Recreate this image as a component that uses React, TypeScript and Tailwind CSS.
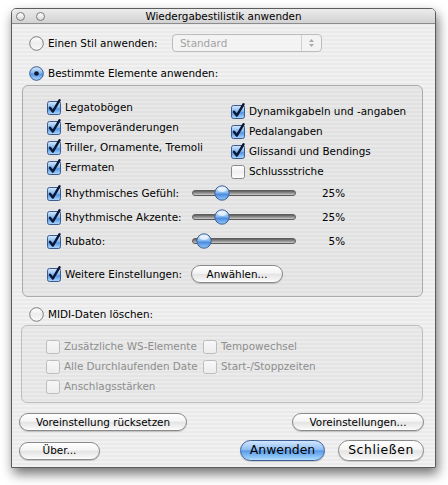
import React from 'react';

// Aqua controls, drawn small
const CheckBox: React.FC<{ checked?: boolean; disabled?: boolean }> = ({ checked = false, disabled = false }) => {
  const stroke = checked ? '#3b5b90' : disabled ? '#bcbcbc' : '#8a8a8a';
  const fill = checked ? 'url(#cbBlue)' : disabled ? 'url(#cbDisabled)' : 'url(#cbWhite)';
  return (
    <svg width="14" height="15" viewBox="0 0 14 15" className="shrink-0 overflow-visible">
      <defs>
        <linearGradient id="cbBlue" x1="0" y1="0" x2="0" y2="1">
          <stop offset="0" stopColor="#d9eafd" />
          <stop offset="0.45" stopColor="#86b9f1" />
          <stop offset="0.55" stopColor="#5596e6" />
          <stop offset="1" stopColor="#b0d8fb" />
        </linearGradient>
        <linearGradient id="cbWhite" x1="0" y1="0" x2="0" y2="1">
          <stop offset="0" stopColor="#ffffff" />
          <stop offset="0.5" stopColor="#f0f0f0" />
          <stop offset="1" stopColor="#fdfdfd" />
        </linearGradient>
        <linearGradient id="cbDisabled" x1="0" y1="0" x2="0" y2="1">
          <stop offset="0" stopColor="#f8f8f8" />
          <stop offset="1" stopColor="#ececec" />
        </linearGradient>
      </defs>
      <rect x="0.5" y="1.5" width="13" height="13" rx="2" fill={fill} stroke={stroke} />
      {checked && (
        <path
          d="M3 7.8 L5.8 11.6 L12.6 0.2"
          fill="none"
          stroke="#0c1733"
          strokeWidth="2.4"
          strokeLinecap="round"
          strokeLinejoin="round"
        />
      )}
    </svg>
  );
};

const Radio: React.FC<{ selected?: boolean }> = ({ selected = false }) => (
  <svg width="15" height="15" viewBox="0 0 15 15" className="shrink-0">
    <defs>
      <linearGradient id="rdBlue" x1="0" y1="0" x2="0" y2="1">
        <stop offset="0" stopColor="#d9eafd" />
        <stop offset="0.45" stopColor="#86b9f1" />
        <stop offset="0.55" stopColor="#5596e6" />
        <stop offset="1" stopColor="#b0d8fb" />
      </linearGradient>
      <linearGradient id="rdWhite" x1="0" y1="0" x2="0" y2="1">
        <stop offset="0" stopColor="#ffffff" />
        <stop offset="0.5" stopColor="#ededed" />
        <stop offset="1" stopColor="#fbfbfb" />
      </linearGradient>
    </defs>
    <circle
      cx="7.5"
      cy="7.5"
      r="6.8"
      fill={selected ? 'url(#rdBlue)' : 'url(#rdWhite)'}
      stroke={selected ? '#3b5b90' : '#7c7c7c'}
    />
    {selected && <circle cx="7.5" cy="7.5" r="2.3" fill="#101830" />}
  </svg>
);

const Slider: React.FC<{ value: number }> = ({ value }) => (
  <div className="relative w-[104px] h-[16px] flex items-center shrink-0">
    <div className="w-full h-[6px] rounded-full border border-[#5c5c5c] bg-[linear-gradient(to_bottom,#5e5e5e,#9c9c9c_60%,#cdcdcd)]" />
    <svg
      width="16"
      height="16"
      viewBox="0 0 16 16"
      className="absolute top-0"
      style={{ left: (value / 100) * 88 }}
    >
      <defs>
        <linearGradient id="knob" x1="0" y1="0" x2="0" y2="1">
          <stop offset="0" stopColor="#e2effd" />
          <stop offset="0.45" stopColor="#8bbcf2" />
          <stop offset="0.6" stopColor="#4d8de0" />
          <stop offset="1" stopColor="#93c9f8" />
        </linearGradient>
      </defs>
      <circle cx="8" cy="8" r="7.2" fill="url(#knob)" stroke="#3f5f92" />
      <ellipse cx="8" cy="4.6" rx="4.4" ry="2.4" fill="#ffffff" opacity="0.65" />
    </svg>
  </div>
);

const AquaButton: React.FC<{
  children: React.ReactNode;
  className?: string;
  primary?: boolean;
}> = ({ children, className = '', primary = false }) => (
  <div
    className={`flex items-center justify-center rounded-full border shadow-[0_1px_1px_rgba(0,0,0,0.18)] ${
      primary
        ? 'border-[#3d5f98] bg-[linear-gradient(to_bottom,#d3e6fc_0%,#8fbef3_45%,#5a9be8_52%,#8ec6f8_85%,#b8ddfc_100%)]'
        : 'border-[#8a8a8a] bg-[linear-gradient(to_bottom,#ffffff_0%,#f4f4f4_45%,#e4e4e4_52%,#f3f3f3_85%,#ffffff_100%)]'
    } ${className}`}
  >
    {children}
  </div>
);

const CheckRow: React.FC<{ label: string; checked?: boolean; disabled?: boolean; className?: string }> = ({
  label,
  checked,
  disabled,
  className = '',
}) => (
  <div className={`flex items-center gap-[4px] h-[20px] whitespace-nowrap ${className}`}>
    <CheckBox checked={checked} disabled={disabled} />
    <span className={disabled ? 'text-[#8e8e8e]' : ''}>{label}</span>
  </div>
);

const sliders = [
  { label: 'Rhythmisches Gefühl:', value: 25 },
  { label: 'Rhythmische Akzente:', value: 25 },
  { label: 'Rubato:', value: 5 },
];

const App: React.FC = () => {
  return (
    <div className="w-[448px] h-[485px] bg-white pt-[8px] pl-[11px] font-['DejaVu_Sans','Liberation_Sans',sans-serif] text-[10.4px] text-black leading-none">
      <div className="w-[425px] h-[460px] border border-[#5c5c5c] rounded-t-[5px] overflow-hidden flex flex-col shadow-[2px_6px_12px_rgba(0,0,0,0.55)] bg-[repeating-linear-gradient(to_bottom,#f1f1f1_0px,#f1f1f1_2px,#eaeaea_2px,#eaeaea_4px)]">
        {/* Title bar */}
        <div className="h-[15px] shrink-0 grid grid-cols-[1fr_auto_1fr] items-center border-b border-[#8c8c8c] bg-[linear-gradient(to_bottom,#ececec,#d2d2d2)]">
          <div className="flex items-center gap-[11px] pl-[4px]">
            <div className="w-[9px] h-[9px] rounded-full border border-[#7a7a7a] bg-[linear-gradient(to_bottom,#ffffff,#d8d8d8)]" />
            <div className="w-[9px] h-[9px] rounded-full border border-[#7a7a7a] bg-[linear-gradient(to_bottom,#ffffff,#d8d8d8)]" />
          </div>
          <span className="pt-[1px]">Wiedergabestilistik anwenden</span>
          <div />
        </div>

        {/* Style choice */}
        <div className="mt-[10px] h-[18px] ml-[17px] flex items-center">
          <Radio />
          <span className="ml-[4px] w-[124px]">Einen Stil anwenden:</span>
          <div className="w-[150px] h-[18px] flex border border-[#bcbcbc] rounded-[4px] bg-[#f6f6f6]/60 text-[#a3a3a3]">
            <span className="flex-1 flex items-center pl-[7px]">Standard</span>
            <div className="w-[20px] border-l border-[#d0d0d0] flex flex-col items-center justify-center gap-[2px]">
              <svg width="5" height="3" viewBox="0 0 5 3">
                <path d="M0 3 L2.5 0 L5 3 Z" fill="#a8a8a8" />
              </svg>
              <svg width="5" height="3" viewBox="0 0 5 3">
                <path d="M0 0 L2.5 3 L5 0 Z" fill="#a8a8a8" />
              </svg>
            </div>
          </div>
        </div>

        <div className="mt-[14px] h-[14px] ml-[17px] flex items-center">
          <Radio selected />
          <span className="ml-[4px]">Bestimmte Elemente anwenden:</span>
        </div>

        {/* Elements group */}
        <div className="mt-[5px] ml-[10px] w-[401px] h-[212px] shrink-0 border border-[#ababab] rounded-[6px] bg-black/[0.035] pl-[24px] pt-[11px]">
          <div className="h-[84px] flex">
            <div className="w-[184px]">
              <CheckRow label="Legatobögen" checked />
              <CheckRow label="Tempoveränderungen" checked />
              <CheckRow label="Triller, Ornamente, Tremoli" checked />
              <CheckRow label="Fermaten" checked />
            </div>
            <div className="pt-[4px]">
              <CheckRow label="Dynamikgabeln und -angaben" checked />
              <CheckRow label="Pedalangaben" checked />
              <CheckRow label="Glissandi und Bendings" checked />
              <CheckRow label="Schlussstriche" />
            </div>
          </div>

          {sliders.map((s) => (
            <div key={s.label} className="h-[24px] flex items-center">
              <CheckRow label={s.label} checked className="w-[145px]" />
              <Slider value={s.value} />
              <span className="w-[49px] text-right">{s.value}%</span>
            </div>
          ))}

          <div className="mt-[11px] h-[20px] flex items-center">
            <CheckRow label="Weitere Einstellungen:" checked className="w-[144px]" />
            <AquaButton className="w-[92px] h-[18px]">Anwählen...</AquaButton>
          </div>
        </div>

        {/* MIDI */}
        <div className="mt-[10px] h-[14px] ml-[17px] flex items-center">
          <Radio />
          <span className="ml-[4px]">MIDI-Daten löschen:</span>
        </div>

        <div className="mt-[4px] ml-[9px] w-[402px] h-[78px] shrink-0 border border-[#bdbdbd] rounded-[6px] bg-black/[0.025] pl-[24px] pt-[10px]">
          <div className="flex">
            <div className="w-[153px] mr-[4px] overflow-hidden">
              <CheckRow label="Zusätzliche WS-Elemente" disabled />
              <CheckRow label="Alle Durchlaufenden Date" disabled />
              <CheckRow label="Anschlagsstärken" disabled />
            </div>
            <div>
              <CheckRow label="Tempowechsel" disabled />
              <CheckRow label="Start-/Stoppzeiten" disabled />
            </div>
          </div>
        </div>

        {/* Buttons */}
        <div className="mt-[10px] ml-[7px] mr-[11px] flex justify-between">
          <AquaButton className="w-[168px] h-[18px]">Voreinstellung rücksetzen</AquaButton>
          <AquaButton className="w-[132px] h-[18px]">Voreinstellungen...</AquaButton>
        </div>

        <div className="mt-[9px] ml-[7px] mr-[11px] h-[21px] flex items-center">
          <AquaButton className="w-[81px] h-[18px]">Über...</AquaButton>
          <div className="flex-1" />
          <AquaButton primary className="w-[85px] h-[21px] text-[12.4px]">
            Anwenden
          </AquaButton>
          <AquaButton className="ml-[13px] w-[86px] h-[21px] text-[12.4px] tracking-[0.6px]">
            Schließen
          </AquaButton>
        </div>
      </div>
    </div>
  );
};

export default App;
